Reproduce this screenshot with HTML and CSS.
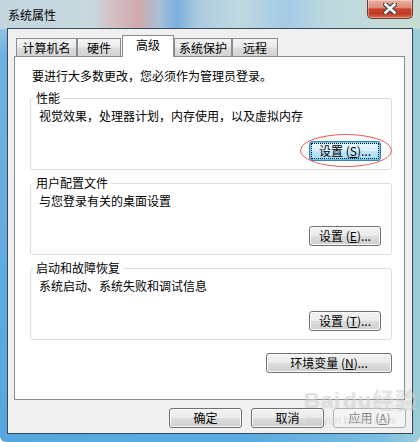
FILE: index.html
```html
<!DOCTYPE html>
<html lang="zh-CN">
<head>
<meta charset="utf-8">
<title>系统属性</title>
<link rel="stylesheet" href="styles.css">
</head>
<body>
<div class="window">
  <div class="titlebar">
    <span class="title">系统属性</span>
    <div class="close">
      <svg width="14" height="11" viewBox="0 0 14 11">
        <path d="M2.5 1.5 L11.5 9.5 M11.5 1.5 L2.5 9.5" stroke="#3d4652" stroke-width="5" stroke-linecap="square" fill="none"/>
        <path d="M2.5 1.5 L11.5 9.5 M11.5 1.5 L2.5 9.5" stroke="#ffffff" stroke-width="2.6" stroke-linecap="square" fill="none"/>
      </svg>
    </div>
  </div>
  <div class="client">
    <div class="tabs">
      <div class="tab t1">计算机名</div>
      <div class="tab t2">硬件</div>
      <div class="tab t3 active">高级</div>
      <div class="tab t4">系统保护</div>
      <div class="tab t5">远程</div>
    </div>
    <div class="panel">
      <div class="intro">要进行大多数更改，您必须作为管理员登录。</div>
      <div class="group g1">
        <div class="group-label">性能</div>
        <div class="desc">视觉效果，处理器计划，内存使用，以及虚拟内存</div>
        <div class="btn-row">
          <div class="btn-wrap">
            <div class="btn focused"><span class="focus-rect">设置 (<u>S</u>)...</span></div>
            <div class="ellipse"></div>
          </div>
        </div>
      </div>
      <div class="group">
        <div class="group-label">用户配置文件</div>
        <div class="desc">与您登录有关的桌面设置</div>
        <div class="btn-row">
          <div class="btn">设置 (<u>E</u>)...</div>
        </div>
      </div>
      <div class="group">
        <div class="group-label">启动和故障恢复</div>
        <div class="desc">系统启动、系统失败和调试信息</div>
        <div class="btn-row">
          <div class="btn">设置 (<u>T</u>)...</div>
        </div>
      </div>
      <div class="env-row">
        <div class="btn env">环境变量 (<u>N</u>)...</div>
      </div>
    </div>
    <div class="dlg-buttons">
      <div class="btn dlg">确定</div>
      <div class="btn dlg">取消</div>
      <div class="btn dlg disabled">应用 (<u>A</u>)</div>
    </div>
  </div>
  <div class="watermark">
    <span class="wm-big">Bai<span class="wm-du">du</span>经验</span>
    <span class="wm-small">jingyan.baidu.com</span>
  </div>
</div>
</body>
</html>
```
FILE: styles.css
```css
* { box-sizing: border-box; }
html, body {
  margin: 0;
  padding: 0;
  background: #ffffff;
}
body {
  width: 420px;
  height: 442px;
  overflow: hidden;
  font-family: "Noto Sans CJK SC", "Liberation Sans", sans-serif;
  font-size: 12px;
  color: #000;
}
.window {
  position: relative;
  width: 420px;
  height: 442px;
  padding: 0 7px 8px 7px;
  display: flex;
  flex-direction: column;
  border-radius: 0 0 6px 6px;
  background:
    linear-gradient(90deg, #c3d5de 0, #c7d8df 22%, #d3c0c3 27%, #cfa9ac 33%, #a8bfd6 38%, #78b0dc 42%, #a9cbe0 47%, #c1d8e1 57%, #a3cbe6 68%, #bdd8df 78%, #c7dcd4 100%) top left / 100% 29px no-repeat,
    linear-gradient(180deg, #b7d4e4 0, #6fb2e0 12%, #55a6dd 100%) left top / 8px 100% no-repeat,
    linear-gradient(90deg, #55a7de 0, #5aabe0 60%, #79bde2 90%, #9ccdd6 100%);
}
.titlebar {
  height: 28px;
  margin: 0 -7px;
  padding: 0 7px 0 8px;
  display: flex;
  align-items: flex-start;
}
.title {
  padding-top: 7px;
  line-height: 16px;
  font-size: 12px;
  color: #000;
}
.close {
  margin-left: auto;
  width: 46px;
  height: 19px;
  border: 1px solid #6b3a35;
  border-top: none;
  border-radius: 0 0 5px 5px;
  background: linear-gradient(180deg, #eab0a2 0%, #de8b77 42%, #c7452c 50%, #c13b22 75%, #d7694d 100%);
  box-shadow: inset 0 0 0 1px rgba(255, 255, 255, 0.35);
  display: flex;
  align-items: center;
  justify-content: center;
}
.close svg { display: block; margin-top: -1px; }

.client {
  flex: 1;
  border: 1px solid #34495a;
  background: #f0f0f0;
  padding: 6px 7px 0 6px;
  display: flex;
  flex-direction: column;
}
.tabs {
  display: flex;
  align-items: flex-end;
  height: 21px;
  padding-left: 2px;
  position: relative;
  z-index: 1;
}
.tab {
  height: 18px;
  border: 1px solid #898c95;
  border-bottom: none;
  background: linear-gradient(180deg, #f5f5f5 0%, #ebebeb 45%, #dcdcdc 55%, #d2d2d2 100%);
  line-height: 17px;
  text-align: center;
  white-space: nowrap;
}
.t1 { width: 61px; }
.t2 { width: 44px; }
.t3 { width: 52px; margin-left: 1px; }
.t4 { width: 58px; }
.t5 { width: 46px; }
.tab.active {
  height: 22px;
  margin-bottom: -1px;
  background: #ffffff;
  line-height: 17px;
}
.panel {
  height: 344px;
  border: 1px solid #898c95;
  background: #ffffff;
  padding: 0 12px 0 15px;
}
.intro {
  margin-top: 11px;
  padding-left: 2px;
  line-height: 16px;
}
.group {
  margin-top: 13px;
  border: 1px solid #d5dfe5;
  border-radius: 3px;
  padding: 0 10px 8px 8px;
}
.group.g1 { margin-top: 14px; }
.group-label {
  display: block;
  width: max-content;
  margin: -8px 0 0 -6px;
  padding: 0 3px;
  background: #ffffff;
  line-height: 14px;
}
.desc {
  margin-top: 3px;
  line-height: 16px;
}
.btn-row {
  margin-top: 17px;
  display: flex;
  justify-content: flex-end;
}
.btn-wrap { position: relative; }
.btn {
  width: 72px;
  height: 20px;
  border: 1px solid #707070;
  border-radius: 3px;
  background: linear-gradient(180deg, #f2f2f2 0%, #ebebeb 50%, #dddddd 50%, #cfcfcf 100%);
  box-shadow: inset 0 0 0 1px #fbfbfb;
  line-height: 18px;
  text-align: center;
  white-space: nowrap;
}
.btn u { text-decoration: underline; text-underline-offset: 1px; }
.btn.focused {
  border-color: #3c7fb1;
  background: linear-gradient(180deg, #eaf6fd 0%, #d9f0fc 50%, #bee6fd 50%, #a7d9f5 100%);
  box-shadow: inset 0 0 0 1px #4fd0f6;
  padding: 2px;
  line-height: 14px;
}
.focus-rect {
  display: block;
  height: 14px;
  outline: 1px dotted #000;
}
.ellipse {
  position: absolute;
  left: -9px;
  top: -7px;
  width: 92px;
  height: 33px;
  border: 1px solid #e2605f;
  border-radius: 50%;
  pointer-events: none;
}
.env-row {
  margin-top: 13px;
  display: flex;
  justify-content: flex-end;
}
.btn.env { width: 126px; }
.dlg-buttons {
  margin-top: 8px;
  margin-right: -1px;
  display: flex;
  justify-content: flex-end;
  gap: 9px;
}
.btn.dlg { width: 73px; }
.btn.disabled {
  border-color: #adb2b5;
  background: #f4f4f4;
  box-shadow: none;
  color: #838383;
}
.watermark {
  position: absolute;
  left: 304px;
  top: 388px;
  display: flex;
  flex-direction: column;
  pointer-events: none;
  color: rgba(255, 255, 255, 0.4);
  text-shadow: 0 0 1px rgba(120, 120, 120, 0.35);
  font-family: "Liberation Sans", "Noto Sans CJK SC", sans-serif;
}
.wm-big {
  font-size: 22px;
  font-weight: bold;
  line-height: 26px;
  letter-spacing: 1px;
}
.wm-du { margin-left: 2px; }
.wm-small {
  font-size: 11px;
  line-height: 12px;
  margin-left: 2px;
}
```
